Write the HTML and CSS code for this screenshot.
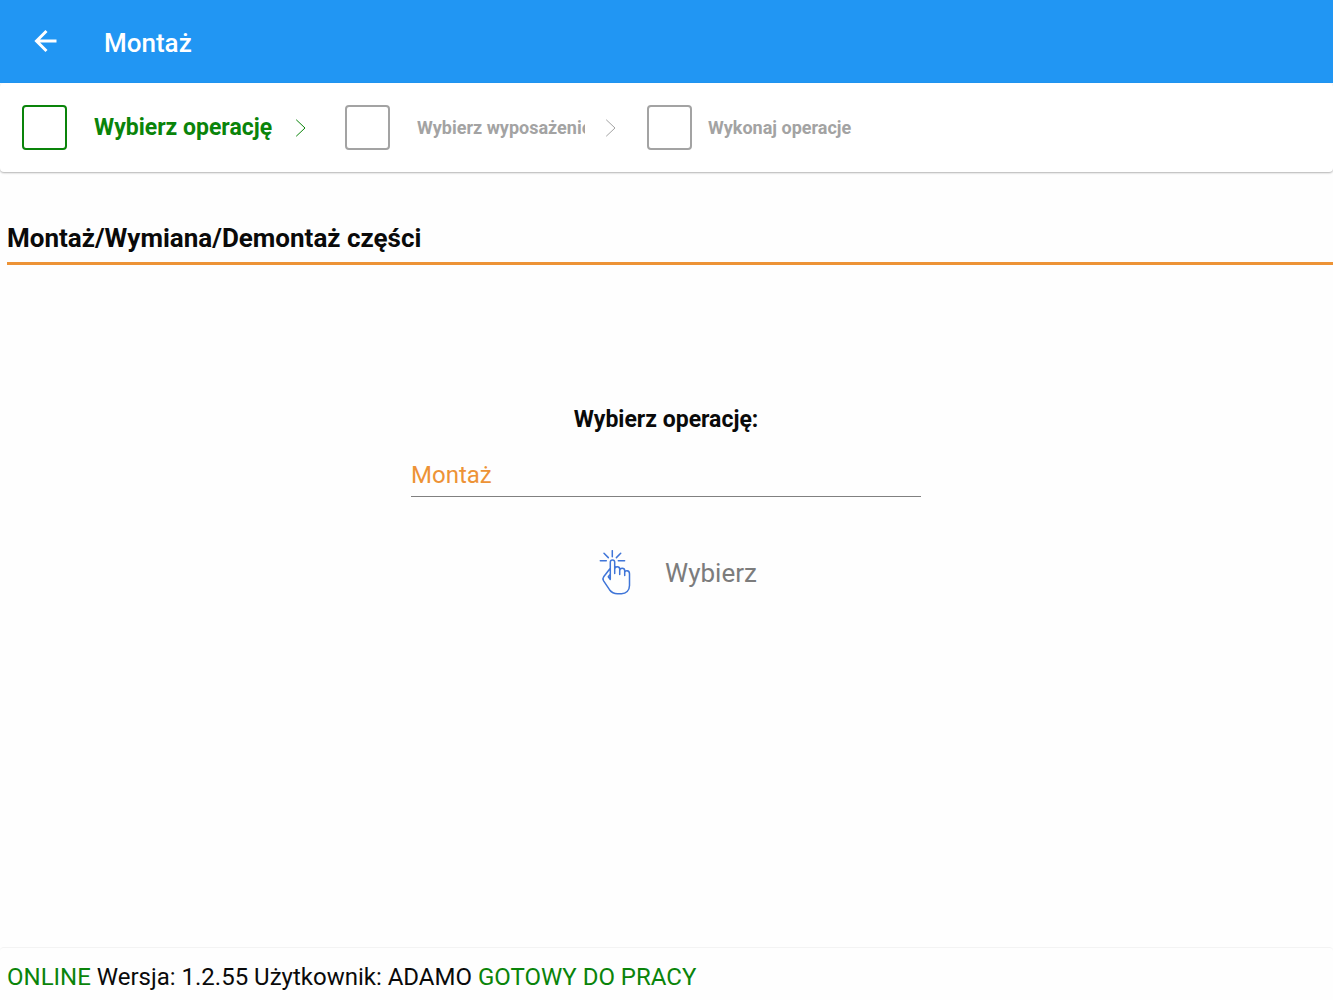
FILE: index.html
```html
<!DOCTYPE html>
<html lang="pl">
<head>
  <meta charset="utf-8">
  <meta name="viewport" content="width=device-width, initial-scale=1">
  <title>Montaż</title>
  <link rel="stylesheet" href="styles.css">
</head>
<body>
  <header class="app-bar">
    <button class="back" type="button" aria-label="Wstecz">
      <svg width="24" height="24" viewBox="0 0 24 24" aria-hidden="true"><path d="M22.500 12H3M12.500 2L2.500 12L12.500 22"/></svg>
    </button>
    <h1 class="app-title">Montaż</h1>
  </header>

  <nav class="stepper" aria-label="Kroki">
    <div class="step step-active">
      <input class="step-box" type="checkbox" id="step-1">
      <label class="step-label" for="step-1">Wybierz operację</label>
      <svg class="chevron" width="12" height="18" viewBox="0 0 12 18" aria-hidden="true"><path d="M1.500 1L10 9L1.500 17"/></svg>
    </div>
    <div class="step step-clipped">
      <input class="step-box" type="checkbox" id="step-2">
      <label class="step-label" for="step-2">Wybierz wyposażenie</label>
      <svg class="chevron" width="12" height="18" viewBox="0 0 12 18" aria-hidden="true"><path d="M1.500 1L10 9L1.500 17"/></svg>
    </div>
    <div class="step step-last">
      <input class="step-box" type="checkbox" id="step-3">
      <label class="step-label" for="step-3">Wykonaj operacje</label>
    </div>
  </nav>

  <main class="content">
    <h2 class="section-title">Montaż/Wymiana/Demontaż części</h2>
    <form class="operation">
      <label class="operation-label" for="operation">Wybierz operację:</label>
      <select class="operation-select" id="operation">
        <option>Montaż</option>
      </select>
      <button class="choose" type="button">
        <svg width="32" height="46" viewBox="0 0 32 46" aria-hidden="true">
          <path d="M13.300 .7V6.700M5 3.300L9.300 7.600M21.700 3.300L17.400 7.600M1.300 10.700H7.300M19.300 10.700H25.600"/>
          <path d="M11.300 29V12.300a2.200 2.200 0 0 1 4.400 0V23.500M15.700 19.200c0-3.300 5-3.300 5 0V24.500M20.700 20.700c0-3.300 5-3.300 5 0V25.500M25.700 22.800c0-3 4.800-2.800 4.800 .9V35.500c0 5-3.500 8.200-8 8.200H18.500c-3.500 0-6-1.300-8-4L4.600 30.800c-.9-1.500-.8-2.800 .1-4L11.300 18.200M11.300 24.200L9.300 26.700l2 2.800"/>
        </svg>
        <span>Wybierz</span>
      </button>
    </form>
  </main>

  <footer class="status">
    <span class="ok">ONLINE</span> Wersja: 1.2.55 Użytkownik: ADAMO <span class="ok">GOTOWY DO PRACY</span>
  </footer>
</body>
</html>
```
FILE: styles.css
```css
* {
  box-sizing: border-box;
}

body {
  margin: 0;
  min-height: 100vh;
  display: flex;
  flex-direction: column;
  background: #fefefe;
  color: #0a0a0a;
  font-family: Roboto, "Liberation Sans", sans-serif;
}

button,
select {
  margin: 0;
  padding: 0;
  border: 0;
  background: none;
  font: inherit;
}

svg {
  flex: none;
  fill: none;
  stroke: currentColor;
  stroke-linecap: round;
  stroke-linejoin: round;
}

.app-bar {
  display: flex;
  align-items: center;
  gap: 32px;
  height: 83px;
  padding: 0 24px;
  background: #2196f3;
  color: #fff;
}

.back {
  display: grid;
  place-items: center;
  width: 48px;
  height: 48px;
  padding: 0 4px 2px 0;
  color: inherit;
}

.back svg {
  stroke-width: 3;
  stroke-linecap: butt;
  stroke-linejoin: miter;
}

.app-title {
  margin: 0;
  padding-top: 3px;
  font-size: 26px;
  line-height: 32px;
  font-weight: 500;
}

.stepper {
  display: flex;
  align-items: center;
  gap: 38px;
  padding: 22px;
  background: #fff;
  border-radius: 4px;
  box-shadow: 0 1px 2px rgba(0, 0, 0, .3);
}

.step {
  display: flex;
  align-items: center;
  color: #a3a3a3;
  font-size: 18px;
  line-height: 28px;
  font-weight: 700;
}

.step-box {
  appearance: none;
  flex: none;
  width: 45px;
  height: 45px;
  margin: 0 27px 0 0;
  border: 2px solid #a3a3a3;
  border-radius: 4px;
}

.step-active {
  color: #0a840a;
  font-size: 23px;
}

.step-active .step-box {
  border-color: #0a840a;
}

.step-active .step-label {
  min-width: 181px;
}

.step-clipped .step-label {
  width: 168px;
  overflow: hidden;
  white-space: nowrap;
}

.step-last {
  margin-left: -8px;
}

.step-last .step-box {
  margin-right: 16px;
}

.chevron {
  margin-left: 20px;
  stroke-width: 1;
}

.content {
  flex: 1;
  padding: 50px 0 48px 7px;
}

.section-title {
  margin: 0;
  padding-bottom: 8px;
  border-bottom: 3px solid #ed9336;
  font-size: 26px;
  line-height: 32px;
  font-weight: 700;
}

.operation {
  display: flex;
  flex-direction: column;
  align-items: center;
  padding: 139px 8px 0 0;
}

.operation-label {
  font-size: 23px;
  line-height: 32px;
  font-weight: 700;
}

.operation-select {
  appearance: none;
  width: 100%;
  max-width: 510px;
  height: 48px;
  margin-top: 13px;
  padding-top: 4px;
  border-bottom: 1px solid #808080;
  color: #ed9336;
  font-size: 24px;
}

.choose {
  display: flex;
  align-items: center;
  gap: 34px;
  margin-top: 53px;
  padding-left: 24px;
  color: #7c7c7c;
  font-size: 26px;
  line-height: 32px;
}

.choose svg {
  color: #3f75d8;
  stroke-width: 1.5;
}

.status {
  padding: 12px 7px 6px;
  border-top: 1px solid #f3f3f3;
  border-radius: 4px;
  font-size: 24px;
  line-height: 34px;
}

.ok {
  color: #0a840a;
}
```
